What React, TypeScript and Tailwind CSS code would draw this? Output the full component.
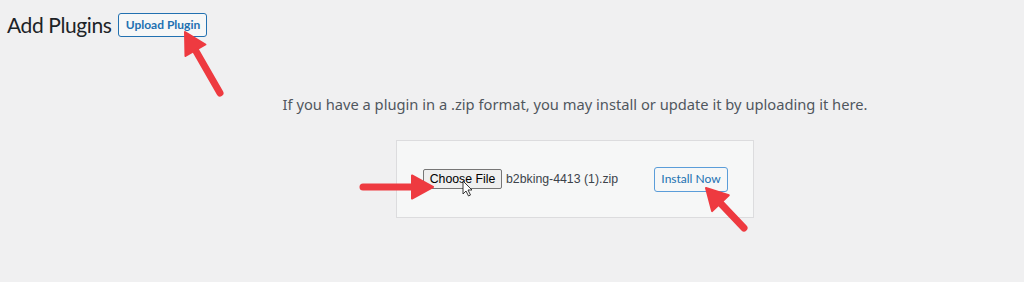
import React from 'react'

type Pt = [number, number]

const UI_FONT = '"Lato", "Noto Sans", sans-serif'

// red annotation arrow: shaft + triangular head
function Arrow({ from, to }: { from: Pt; to: Pt }) {
  const dx = to[0] - from[0]
  const dy = to[1] - from[1]
  const len = Math.hypot(dx, dy)
  const ux = dx / len
  const uy = dy / len
  const headLen = 21
  const headW = 11.5
  const bx = to[0] - ux * headLen
  const by = to[1] - uy * headLen
  const p1: Pt = [bx - uy * headW, by + ux * headW]
  const p2: Pt = [bx + uy * headW, by - ux * headW]
  return (
    <g>
      <line x1={from[0]} y1={from[1]} x2={bx + ux * 2} y2={by + uy * 2} stroke="#ee3a40" strokeWidth={7} strokeLinecap="round" />
      <polygon points={`${to[0]},${to[1]} ${p1[0]},${p1[1]} ${p2[0]},${p2[1]}`} fill="#ee3a40" stroke="#ee3a40" strokeWidth={2} strokeLinejoin="round" />
    </g>
  )
}

export default function App() {
  return (
    <div className="relative h-[282px] w-[1024px] overflow-hidden bg-[#f0f0f1]">
      {/* Header */}
      <div className="flex items-center gap-[7px] pl-[7px] pt-[13px]">
        <h1 className="text-[21px] leading-[24px] tracking-[-0.4px] text-[#1d2327]" style={{ fontFamily: UI_FONT }}>
          Add Plugins
        </h1>
        <button
          className="h-[24px] w-[89px] rounded-[3px] border border-[#2271b1] bg-[#f6f7f7] text-[12px] font-bold text-[#2271b1]"
          style={{ fontFamily: UI_FONT }}
        >
          Upload Plugin
        </button>
      </div>

      {/* Upload area */}
      <div className="pl-[126px]">
        <p
          className="mt-[57px] text-center text-[14.7px] leading-[20px] text-[#50575e]"
          style={{ fontFamily: '"Noto Sans", sans-serif' }}
        >
          If you have a plugin in a .zip format, you may install or update it by uploading it here.
        </p>
        <div className="mx-auto mt-[26px] flex h-[78px] w-[358px] items-center justify-between border border-[#dcdcde] bg-[#f6f7f7] pl-[26px] pr-[25px]">
          <div className="flex items-center gap-[4px]" style={{ fontFamily: '"Liberation Sans", Arial, sans-serif' }}>
            <button className="h-[20px] w-[79px] rounded-[2px] border border-[#767676] bg-[#efefef] text-[12.3px] text-black">
              Choose File
            </button>
            <span className="text-[12.3px] text-[#3c434a]">b2bking-4413 (1).zip</span>
          </div>
          <button
            className="h-[25px] w-[74px] rounded-[3px] border border-[#5b9dd9] bg-[#f6f7f7] text-[12px] text-[#2271b1]"
            style={{ fontFamily: UI_FONT }}
          >
            Install Now
          </button>
        </div>
      </div>

      {/* Annotations */}
      <svg className="pointer-events-none absolute left-0 top-0" width={1024} height={282}>
        <Arrow from={[220, 93]} to={[185, 32]} />
        <Arrow from={[363, 187]} to={[433, 187]} />
        <Arrow from={[744, 228]} to={[706, 188]} />
        {/* mouse pointer */}
        <path
          d="M463 181 L463 194 L466 191 L468.5 196 L470.5 195 L468 190 L472 190 Z"
          fill="#fff"
          stroke="#222"
          strokeWidth={0.9}
          strokeLinejoin="round"
        />
      </svg>
    </div>
  )
}
